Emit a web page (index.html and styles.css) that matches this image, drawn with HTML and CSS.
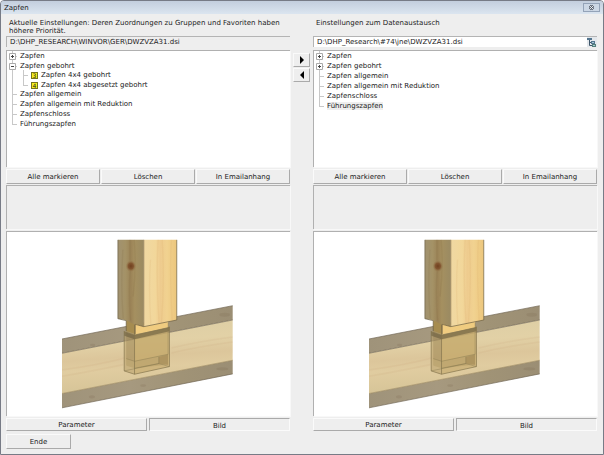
FILE: index.html
```html
<!DOCTYPE html>
<html lang="de">
<head>
<meta charset="utf-8">
<title>Zapfen</title>
<link rel="stylesheet" href="styles.css">
</head>
<body>
<svg class="defs" aria-hidden="true">
  <defs>
    <linearGradient id="post-side" x1="0" x2="1" y1="0" y2="0">
      <stop offset="0" stop-color="#a19270"/><stop offset=".3" stop-color="#a49266"/><stop offset=".5" stop-color="#9b8357"/><stop offset=".65" stop-color="#a59060"/><stop offset="1" stop-color="#9a8a62"/>
    </linearGradient>
    <linearGradient id="post-front" x1="0" x2="1" y1="0" y2="0">
      <stop offset="0" stop-color="#f0d8a2"/><stop offset=".35" stop-color="#f2d79a"/><stop offset=".5" stop-color="#eecb8e"/><stop offset=".7" stop-color="#f1d290"/><stop offset="1" stop-color="#ecc67c"/>
    </linearGradient>
    <linearGradient id="beam-front" x1="0" x2=".15" y1="0" y2="1">
      <stop offset="0" stop-color="#dccda4"/><stop offset=".35" stop-color="#e2d1a6"/><stop offset=".55" stop-color="#dcc69b"/><stop offset=".7" stop-color="#e0cca0"/><stop offset="1" stop-color="#d6c497"/>
    </linearGradient>
    <linearGradient id="beam-face" x1="0" x2="1" y1="0" y2="0">
      <stop offset="0" stop-color="#9f937a"/><stop offset=".4" stop-color="#a6997f"/><stop offset=".7" stop-color="#a09376"/><stop offset="1" stop-color="#9b8e74"/>
    </linearGradient>
    <radialGradient id="knot">
      <stop offset="0" stop-color="#70401f"/><stop offset=".5" stop-color="#835630"/><stop offset="1" stop-color="#9a8054" stop-opacity="0"/>
    </radialGradient>
    <symbol id="joint" viewBox="36 28 514 510">
      <path fill="url(#beam-face)" d="M36 328 549 228V271L36 371Z"/>
      <path fill="url(#beam-front)" d="M36 371 549 271V392L36 492Z"/>
      <path fill="url(#beam-face)" d="M36 492 549 392V433L36 535Z"/>
      <g fill="none" stroke="#c69e72" stroke-width="5" opacity=".12">
        <path d="M36 421Q150 405 225 385M365 355Q450 335 549 322M365 370Q450 350 549 337M36 440Q140 422 220 405"/>
      </g>
      <g fill="#806c54" opacity=".22">
        <ellipse cx="525" cy="255" rx="16" ry="6"/>
        <ellipse cx="128" cy="346" rx="8" ry="4"/>
        <ellipse cx="126" cy="502" rx="9" ry="5"/>
        <ellipse cx="280" cy="468" rx="9" ry="4"/>
        <ellipse cx="518" cy="418" rx="18" ry="5"/>
      </g>
      <g fill="none" stroke="#6f6553" stroke-width="2">
        <path d="M36 371 549 271M36 328 549 228"/>
        <path stroke="#a38e61" d="M36 492 549 392"/>
        <path d="M36 535 549 433"/>
      </g>
      <path fill="#b8a069" fill-opacity=".55" d="M223 306 359 291V411L254 434 223 424Z"/>
      <path fill="#d6b978" fill-opacity=".3" d="M254 316 359 294V411L254 434Z"/>
      <path fill="#8d7848" fill-opacity=".3" d="M229 303 254 314V395L229 387Z"/>
      <path fill="#c2a565" fill-opacity=".35" d="M254 316 355 295V374L254 395Z"/>
      <path fill="#a38b52" fill-opacity=".3" d="M229 387 254 395 355 374V405L254 416 229 408Z"/>
      <path fill="#8c7442" fill-opacity=".35" d="M327 382 355 375V406L327 402Z"/>
      <path fill="#a68c50" d="M229 270H257V314L229 304Z"/>
      <path fill="#f0cc80" d="M256 283 355 276V294L256 314Z"/>
      <path fill="#62573b" fill-opacity=".55" d="M223 306 254 317 359 293V305L254 329 223 318Z"/>
      <g fill="none" stroke="#82734b" stroke-width="2">
        <path d="M223 304V424L254 434 359 411V291M254 284V434M223 306 254 317 359 293"/>
        <path opacity=".6" d="M229 387 254 395 355 374M223 424 327 402 359 411M327 382V402M355 280V374M254 416 327 402"/>
      </g>
      <path fill="url(#post-side)" d="M204 30H282V291L256 283 256 286 229 272 204 267Z"/>
      <path fill="url(#post-front)" d="M282 30H381V271L282 291Z"/>
      <g fill="none" stroke="#d4a262" stroke-width="4" opacity=".14">
        <path d="M325 30Q318 140 328 282M337 30Q345 150 335 280M302 90Q296 180 303 284M365 30Q359 120 367 272"/>
      </g>
      <g fill="none" stroke="#775a36" stroke-width="4" opacity=".13">
        <path d="M240 30V92M241 122Q235 190 242 272M253 30Q260 110 250 200M219 60Q212 170 220 267"/>
      </g>
      <ellipse cx="243" cy="109" rx="16" ry="18" fill="url(#knot)"/>
      <path fill="none" stroke="#665a40" stroke-width="2" d="M204 30V267L229 273V304M256 284 282 291 381 271V30M256 284V313"/>
      <path fill="none" stroke="#8e7950" stroke-width="2" d="M282 30V291"/>
    </symbol>
  </defs>
</svg>

<div class="window">
  <header class="titlebar">
    <h1 class="title">Zapfen</h1>
    <button class="close" type="button" aria-label="Schließen">
      <svg viewBox="0 0 16 8" aria-hidden="true"><path d="M6 2 10 6M10 2 6 6" fill="none" stroke="#59616e" stroke-width="3"/><path d="M6 2 10 6M10 2 6 6" fill="none" stroke="#f4f6f9" stroke-width="1"/></svg>
    </button>
  </header>

  <main class="content">
    <section class="column">
      <label class="caption" for="path-current">Aktuelle Einstellungen: Deren Zuordnungen zu Gruppen und Favoriten haben höhere Priorität.</label>
      <div class="path path-readonly">
        <input id="path-current" type="text" readonly value="D:\DHP_RESEARCH\WINVOR\GER\DWZVZA31.dsi">
      </div>
      <div class="sunken tree">
        <ul class="nodes">
          <li><div class="row"><button class="toggle" type="button" aria-label="Aufklappen"><svg viewBox="0 0 7 7"><path d="M.5 .5h6v6h-6z" fill="#fff" stroke="#aaa"/><path d="M2 3.500h3M3.500 2v3" stroke="#444"/></svg></button>Zapfen</div></li>
          <li><div class="row"><button class="toggle" type="button" aria-label="Zuklappen"><svg viewBox="0 0 7 7"><path d="M.5 .5h6v6h-6z" fill="#fff" stroke="#aaa"/><path d="M2 3.500h3" stroke="#444"/></svg></button>Zapfen gebohrt</div>
            <ul class="nodes nested">
              <li><div class="row"><span class="badge">3</span>Zapfen 4x4 gebohrt</div></li>
              <li><div class="row"><span class="badge">4</span>Zapfen 4x4 abgesetzt gebohrt</div></li>
            </ul>
          </li>
          <li><div class="row">Zapfen allgemein</div></li>
          <li><div class="row">Zapfen allgemein mit Reduktion</div></li>
          <li><div class="row">Zapfenschloss</div></li>
          <li><div class="row">Führungszapfen</div></li>
        </ul>
      </div>
      <div class="actions">
        <button class="button" type="button">Alle markieren</button>
        <button class="button" type="button">Löschen</button>
        <button class="button" type="button">In Emailanhang</button>
      </div>
      <div class="sunken info"></div>
      <div class="sunken picture"><svg class="drawing" role="img" aria-label="Zapfenverbindung"><use href="#joint"/></svg></div>
      <div class="tabs">
        <button class="button" type="button">Parameter</button>
        <button class="button pressed" type="button" aria-pressed="true">Bild</button>
      </div>
    </section>

    <div class="transfer">
      <button class="button" type="button" aria-label="Nach rechts"><svg viewBox="0 0 4 8"><path d="M0 0 4 4 0 8Z"/></svg></button>
      <button class="button" type="button" aria-label="Nach links"><svg viewBox="0 0 4 8"><path d="M4 0 0 4 4 8Z"/></svg></button>
    </div>

    <section class="column">
      <label class="caption" for="path-exchange">Einstellungen zum Datenaustausch</label>
      <div class="path">
        <input id="path-exchange" type="text" value="D:\DHP_Research\#74\jne\DWZVZA31.dsi">
        <button class="browse" type="button" aria-label="Durchsuchen"><svg viewBox="0 0 9 9"><path d="M2.500 2v5.500H6M2.500 4.500H5" fill="none" stroke="#40576b"/><path fill="#54758e" d="M0 0h5v2H0zM4 3h4v3H4z"/><path fill="#547f79" d="M5 6h4v3H5z"/><path fill="#a9cbd7" d="M5 4h2v1H5zM6 7h2v1H6z"/></svg></button>
      </div>
      <div class="sunken tree">
        <ul class="nodes">
          <li><div class="row"><button class="toggle" type="button" aria-label="Aufklappen"><svg viewBox="0 0 7 7"><path d="M.5 .5h6v6h-6z" fill="#fff" stroke="#aaa"/><path d="M2 3.500h3M3.500 2v3" stroke="#444"/></svg></button>Zapfen</div></li>
          <li><div class="row"><button class="toggle" type="button" aria-label="Aufklappen"><svg viewBox="0 0 7 7"><path d="M.5 .5h6v6h-6z" fill="#fff" stroke="#aaa"/><path d="M2 3.500h3M3.500 2v3" stroke="#444"/></svg></button>Zapfen gebohrt</div></li>
          <li><div class="row">Zapfen allgemein</div></li>
          <li><div class="row">Zapfen allgemein mit Reduktion</div></li>
          <li><div class="row">Zapfenschloss</div></li>
          <li><div class="row"><span class="selected">Führungszapfen</span></div></li>
        </ul>
      </div>
      <div class="actions">
        <button class="button" type="button">Alle markieren</button>
        <button class="button" type="button">Löschen</button>
        <button class="button" type="button">In Emailanhang</button>
      </div>
      <div class="sunken info"></div>
      <div class="sunken picture"><svg class="drawing" role="img" aria-label="Zapfenverbindung"><use href="#joint"/></svg></div>
      <div class="tabs">
        <button class="button" type="button">Parameter</button>
        <button class="button pressed" type="button" aria-pressed="true">Bild</button>
      </div>
    </section>
  </main>

  <footer class="footer">
    <button class="button end" type="button">Ende</button>
  </footer>
</div>
</body>
</html>
```
FILE: styles.css
```css
* {
  box-sizing: border-box;
}

body {
  margin: 0;
  background: #fff;
  color: #222;
  font: 7px/8px "DejaVu Sans", Verdana, sans-serif;
}

button,
input {
  margin: 0;
  padding: 0;
  border: 0;
  background: none;
  color: inherit;
  font: inherit;
}

svg {
  display: block;
}

.defs {
  position: absolute;
  width: 0;
  height: 0;
}

.window {
  display: flex;
  flex-direction: column;
  min-height: 100vh;
  border: 1px solid #777b86;
  border-radius: 4px 4px 0 0;
  background: #eee;
  overflow: hidden;
}

.titlebar {
  display: flex;
  align-items: center;
  justify-content: space-between;
  height: 13px;
  padding: 0 3px;
  background: linear-gradient(#c3cedd, #dbe5f0);
}

.title {
  margin: 0;
  font-size: 7px;
  font-weight: 400;
}

.close {
  width: 17px;
  height: 9px;
  border: 1px solid #94a3b8;
  background: #ccd7e5;
}

.close svg {
  width: 100%;
  height: 100%;
}

.content {
  display: grid;
  flex: 1;
  grid-template-columns: 1fr 23px 1fr;
  padding: 5px 6px 0 5px;
}

.column {
  display: flex;
  flex-direction: column;
  min-width: 0;
}

.caption {
  height: 17px;
  padding-left: 3px;
}

.path {
  display: flex;
  height: 11px;
  border: solid;
  border-width: 1px 0 0 1px;
  border-color: #b4b4b4;
  background: #fff;
}

.path-readonly {
  background: #eee;
}

.path input {
  flex: 1;
  min-width: 0;
  padding-left: 3px;
  outline: 0;
}

.browse {
  width: 10px;
  background: #e4e8ec;
}

.browse svg {
  width: 9px;
  height: 9px;
}

.sunken {
  border: solid;
  border-width: 1px 0 0 1px;
  border-color: #b0b0b0;
  box-shadow: 1px 1px #f8f8f8;
}

.tree {
  height: 117px;
  margin-top: 3px;
  background: #fff;
}

.nodes {
  margin: 0;
  padding: 0 0 0 3px;
  list-style: none;
}

.nodes li {
  padding-left: 10px;
  background:
    linear-gradient(#c8c8c8, #c8c8c8) 2px 0 / 1px 100% no-repeat,
    linear-gradient(#c8c8c8, #c8c8c8) 2px 5px / 5px 1px no-repeat;
}

.nodes li:last-child {
  background-size: 1px 5px, 5px 1px;
}

.nested {
  margin: -1px 0;
  padding-left: 1px;
}

.row {
  position: relative;
  display: flex;
  align-items: center;
  height: 10px;
}

.toggle {
  position: absolute;
  top: 2px;
  left: -11px;
  width: 7px;
  height: 7px;
}

.toggle svg {
  width: 7px;
  height: 7px;
}

.badge {
  width: 7px;
  height: 7px;
  margin-right: 3px;
  border: 1px solid #77751c;
  background: #f5ef1e;
  font-size: 6px;
  line-height: 5px;
  text-align: center;
}

.selected {
  background: #eee;
}

.button {
  border: 1px solid;
  border-color: #fafafa #aaa #aaa #fafafa;
  background: #eee;
  text-align: center;
}

.pressed {
  padding-top: 2px;
  border-color: #aaa #fafafa #fafafa #aaa;
}

.actions,
.tabs {
  display: grid;
  grid-auto-flow: column;
  grid-auto-columns: 1fr;
  gap: 1px;
}

.actions {
  height: 15px;
  margin: 2px 0 1px;
}

.info {
  height: 44px;
}

.picture {
  display: grid;
  flex: 1;
  place-items: center;
  margin-top: 2px;
  padding-right: 2px;
  background: #fff;
}

.drawing {
  width: 171px;
  height: 170px;
}

.tabs {
  gap: 2px;
  height: 13px;
  margin-top: 2px;
}

.transfer {
  display: flex;
  flex-direction: column;
  align-items: center;
  gap: 1px;
  padding-top: 34px;
}

.transfer .button {
  display: grid;
  place-items: center;
  width: 17px;
  height: 14px;
}

.transfer svg {
  width: 4px;
  height: 8px;
}

.footer {
  padding: 3px 5px 5px;
}

.end {
  width: 65px;
  height: 15px;
}
```
